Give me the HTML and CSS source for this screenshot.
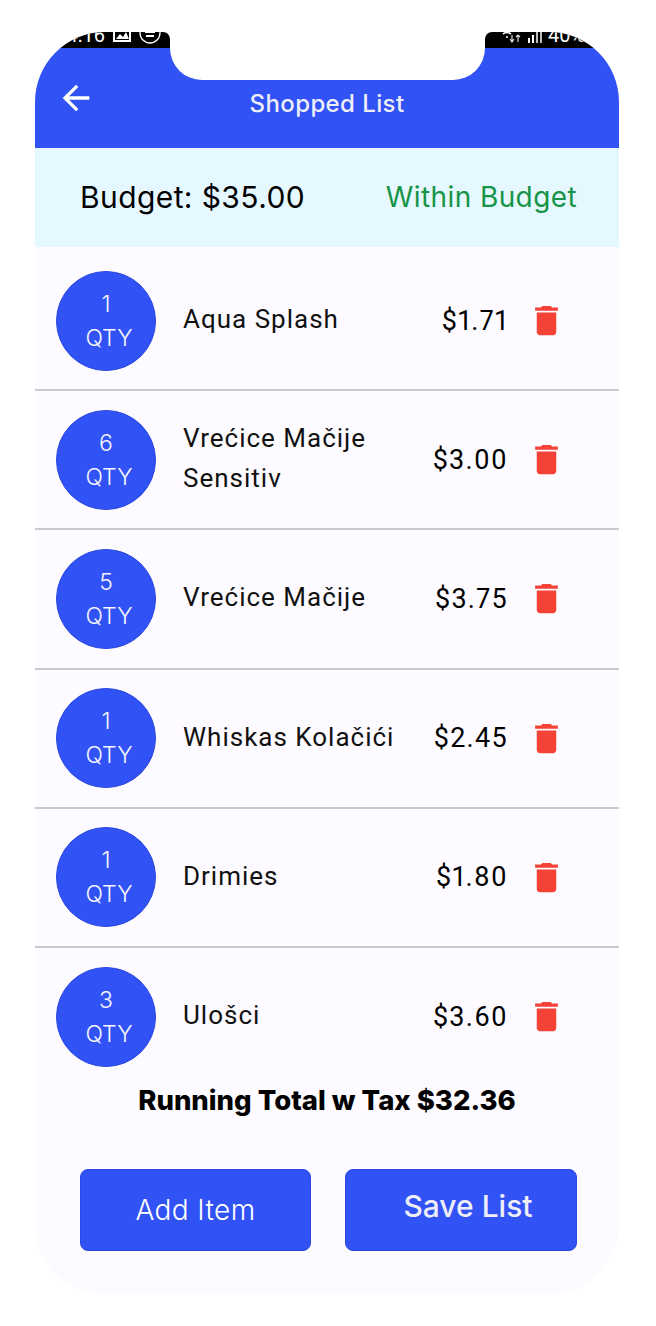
FILE: index.html
```html
<!DOCTYPE html>
<html lang="en">
<head>
    <meta charset="UTF-8">
    <meta name="viewport" content="width=device-width, initial-scale=1.0">
    <title>Shopped List</title>
    <link rel="stylesheet" href="styles.css">
</head>
<body>
    <div class="phone">
        <div class="notch"></div>
        <div class="status-bar">
            <div class="status-left">
                <span class="status-time">4:16</span>
                <svg class="status-photo" viewBox="0 0 18 18"><path d="M1 1h16v15H1z" fill="none" stroke="#fff" stroke-width="2"/><path d="M3 14l4-5 3 3 3-5 3 7z" fill="#fff"/></svg>
                <svg class="status-car" viewBox="0 0 22 22"><circle cx="11" cy="11" r="10" fill="none" stroke="#fff" stroke-width="1.3"/><path d="M6 9h10v2H6zM7 13h8v2H7z" fill="#fff"/></svg>
            </div>
            <div class="status-gap"></div>
            <div class="status-right">
                <svg class="status-wifi" viewBox="0 0 22 16"><path d="M1 4q6-5 12 0M3 7q4-3 8 0M6 10h2" fill="none" stroke="#fff" stroke-width="1.6"/><path d="M12 8v6M10 12l2 3 2-3M18 15V8M16 10l2-2 2 2" fill="none" stroke="#ddd" stroke-width="1.2"/></svg>
                <div class="status-signal"><i></i><i></i><i></i><i></i></div>
                <span class="status-time">40%</span>
            </div>
        </div>
        <header class="app-bar">
            <svg class="back-icon" viewBox="0 0 24 24"><path d="M20 11H7.83l5.59-5.59L12 4l-8 8 8 8 1.41-1.41L7.83 13H20v-2z"/></svg>
            <h1>Shopped List</h1>
        </header>
        <div class="budget">
            <span class="budget-amount">Budget: $35.00</span>
            <span class="budget-state">Within Budget</span>
        </div>
        <ul class="items">
            <li class="item">
                <div class="qty">1<span class="qty-label">QTY</span></div>
                <div class="name">Aqua Splash</div>
                <div class="price">$1.71</div>
                <svg class="trash" viewBox="0 0 24 24"><path d="M6 19c0 1.1.9 2 2 2h8c1.1 0 2-.9 2-2V7H6v12zM19 4h-3.5l-1-1h-5l-1 1H5v2h14V4z"/></svg>
            </li>
            <li class="item">
                <div class="qty">6<span class="qty-label">QTY</span></div>
                <div class="name">Vrećice Mačije Sensitiv</div>
                <div class="price">$3.00</div>
                <svg class="trash" viewBox="0 0 24 24"><path d="M6 19c0 1.1.9 2 2 2h8c1.1 0 2-.9 2-2V7H6v12zM19 4h-3.5l-1-1h-5l-1 1H5v2h14V4z"/></svg>
            </li>
            <li class="item">
                <div class="qty">5<span class="qty-label">QTY</span></div>
                <div class="name">Vrećice Mačije</div>
                <div class="price">$3.75</div>
                <svg class="trash" viewBox="0 0 24 24"><path d="M6 19c0 1.1.9 2 2 2h8c1.1 0 2-.9 2-2V7H6v12zM19 4h-3.5l-1-1h-5l-1 1H5v2h14V4z"/></svg>
            </li>
            <li class="item">
                <div class="qty">1<span class="qty-label">QTY</span></div>
                <div class="name">Whiskas Kolačići</div>
                <div class="price">$2.45</div>
                <svg class="trash" viewBox="0 0 24 24"><path d="M6 19c0 1.1.9 2 2 2h8c1.1 0 2-.9 2-2V7H6v12zM19 4h-3.5l-1-1h-5l-1 1H5v2h14V4z"/></svg>
            </li>
            <li class="item">
                <div class="qty">1<span class="qty-label">QTY</span></div>
                <div class="name">Drimies</div>
                <div class="price">$1.80</div>
                <svg class="trash" viewBox="0 0 24 24"><path d="M6 19c0 1.1.9 2 2 2h8c1.1 0 2-.9 2-2V7H6v12zM19 4h-3.5l-1-1h-5l-1 1H5v2h14V4z"/></svg>
            </li>
            <li class="item">
                <div class="qty">3<span class="qty-label">QTY</span></div>
                <div class="name">Ulošci</div>
                <div class="price">$3.60</div>
                <svg class="trash" viewBox="0 0 24 24"><path d="M6 19c0 1.1.9 2 2 2h8c1.1 0 2-.9 2-2V7H6v12zM19 4h-3.5l-1-1h-5l-1 1H5v2h14V4z"/></svg>
            </li>
        </ul>
        <div class="total">Running Total w Tax $32.36</div>
        <div class="actions">
            <button class="btn btn-add">Add Item</button>
            <button class="btn btn-save">Save List</button>
        </div>
    </div>
</body>
</html>
```

FILE: styles.css
```css
* {
    box-sizing: border-box;
}
body {
    margin: 0;
    padding: 32px 37px 32px 35px;
    background: #fff;
    font-family: Inter, "Liberation Sans", sans-serif;
}
.phone {
    position: relative;
    width: 584px;
    height: 1262px;
    background: #fdfbff;
    border-radius: 70px;
    overflow: hidden;
}
.notch {
    position: absolute;
    z-index: 1;
    top: 0;
    left: 135px;
    width: 315px;
    height: 48px;
    background: #fff;
    border-radius: 0 0 32px 32px;
}
.status-bar {
    display: flex;
    height: 16px;
    background: #fff;
    color: #fff;
}
.status-left, .status-right {
    display: flex;
    align-items: flex-end;
    background: #000;
    padding-bottom: 5px;
    overflow: hidden;
}
.status-left {
    width: 135px;
    justify-content: flex-end;
    gap: 8px;
    padding-right: 9px;
    border-radius: 0 7px 0 0;
}
.status-right {
    width: 134px;
    gap: 6px;
    padding-left: 15px;
    border-radius: 7px 0 0 0;
}
.status-gap {
    flex: 1;
}
.status-time {
    font-family: Roboto, sans-serif;
    font-size: 20px;
    line-height: 16px;
    white-space: nowrap;
}
.status-photo {
    width: 18px;
    height: 18px;
    flex: none;
}
.status-car {
    width: 22px;
    height: 22px;
    flex: none;
    margin-bottom: -1px;
}
.status-wifi {
    width: 22px;
    height: 16px;
    flex: none;
}
.status-signal {
    display: flex;
    align-items: flex-end;
    gap: 2px;
    height: 14px;
    flex: none;
}
.status-signal i {
    width: 2px;
    background: #fff;
}
.status-signal i:nth-child(1) { height: 5px; }
.status-signal i:nth-child(2) { height: 8px; }
.status-signal i:nth-child(3) { height: 11px; background: #bbb; }
.status-signal i:nth-child(4) { height: 14px; background: #bbb; }
.app-bar {
    position: relative;
    height: 100px;
    background: #3152f5;
    padding-top: 39px;
    text-align: center;
}
.back-icon {
    position: absolute;
    left: 21px;
    top: 30px;
    width: 40px;
    height: 40px;
    fill: #fff;
}
.app-bar h1 {
    margin: 0;
    font-size: 24px;
    line-height: 34px;
    letter-spacing: 0.4px;
    font-weight: 500;
    color: #eeeef8;
}
.budget {
    display: flex;
    align-items: center;
    justify-content: space-between;
    height: 99px;
    padding: 0 42px 2px 45px;
    background: #e6f8ff;
}
.budget-amount {
    font-size: 30px;
    letter-spacing: 0.4px;
    color: #000;
}
.budget-state {
    font-size: 28px;
    letter-spacing: 0.4px;
    color: #169447;
}
.items {
    list-style: none;
    margin: 0;
    padding: 5px 0 0;
}
.item {
    display: flex;
    align-items: center;
    height: 139.2px;
    padding: 0 61px 0 21px;
    border-bottom: 2px solid #cac8d0;
}
.item:last-child {
    height: 138px;
    margin-bottom: -2px;
    border-bottom: none;
}
.qty {
    flex: none;
    width: 100px;
    height: 100px;
    padding-top: 15px;
    border: 1px solid #2a48e0;
    border-radius: 50%;
    background: #3152f5;
    color: #f6f6ff;
    font-size: 23px;
    font-weight: 350;
    line-height: 34px;
    text-align: center;
}
.qty-label {
    display: block;
    padding-left: 6px;
}
.name {
    flex: 1;
    margin: 0 0 3px 27px;
    font-family: Roboto, sans-serif;
    font-size: 26px;
    line-height: 40px;
    letter-spacing: 1px;
    color: #111;
}
.price {
    flex: none;
    margin-right: 19px;
    font-family: Roboto, sans-serif;
    font-size: 27px;
    font-variant-numeric: proportional-nums;
    letter-spacing: 1.3px;
    color: #000;
}
.trash {
    flex: none;
    width: 39px;
    height: 39px;
    margin-right: -8px;
    fill: #f44336;
}
.total {
    font-size: 27.5px;
    font-weight: 800;
    line-height: 32px;
    text-align: center;
    color: #000;
}
.actions {
    display: grid;
    grid-template-columns: 231px 232px;
    gap: 34px;
    margin-top: 53px;
    padding: 0 42px 0 45px;
}
.btn {
    height: 82px;
    border: 1px solid #2a48e0;
    border-radius: 8px;
    background: #3152f5;
    font-family: Inter, "Liberation Sans", sans-serif;
    font-size: 28px;
    letter-spacing: 0.4px;
}
.btn-add {
    color: #fff;
    font-weight: 350;
}
.btn-save {
    color: #eeeef8;
    font-size: 30px;
    font-weight: 500;
    letter-spacing: 0;
    padding: 0 0 8px 14px;
}
```
